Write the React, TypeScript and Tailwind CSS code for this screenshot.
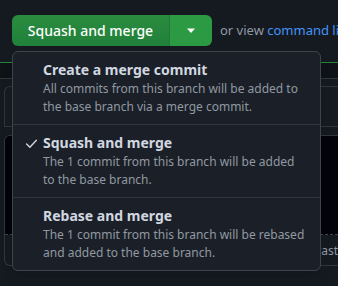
const OPTIONS = [
  {
    title: 'Create a merge commit',
    desc: 'All commits from this branch will be added to the base branch via a merge commit.',
    checked: false,
  },
  {
    title: 'Squash and merge',
    desc: 'The 1 commit from this branch will be added to the base branch.',
    checked: true,
  },
  {
    title: 'Rebase and merge',
    desc: 'The 1 commit from this branch will be rebased and added to the base branch.',
    checked: false,
  },
]

function Check() {
  return (
    <svg width="13" height="13" viewBox="0 0 16 16" fill="none">
      <path d="M2 8.5l4 4 8-8.5" stroke="#d1d7e0" strokeWidth="1.7" strokeLinecap="round" strokeLinejoin="round" />
    </svg>
  )
}

export default function App() {
  return (
    <div
      className="relative w-[338px] h-[286px] overflow-hidden bg-[#151a21]"
      style={{ fontFamily: '"Noto Sans", "Liberation Sans", sans-serif' }}
    >
      {/* merge button row */}
      <div className="flex items-center pt-[15px] pl-[12px]">
        <div className="flex shrink-0 h-[31px] rounded-[6px] overflow-hidden">
          <button className="w-[158px] bg-gradient-to-b from-[#2a8c3f] to-[#21803a] text-white text-[14px] font-medium whitespace-nowrap border-r border-[#1f7a35]">
            Squash and merge
          </button>
          <button className="w-[42px] flex items-center justify-center bg-[#2c9a43]">
            <svg width="10" height="6" viewBox="0 0 10 6">
              <path d="M1 0.5h8L5 5z" fill="#ffffff" />
            </svg>
          </button>
        </div>
        <span className="ml-[8px] shrink-0 text-[13px] whitespace-nowrap text-[#9198a1]">
          or view <span className="text-[#4493f8]">command line instructions</span>
        </span>
      </div>

      {/* merge box behind the menu */}
      <div className="mt-[16px] border-t border-[#238636]">
        <div className="h-[16px] bg-[#0f1318] border-b border-[#30363d]" />
        <div className="pl-[4px] pt-[7px]">
          <div className="h-[41px] rounded-tl-[6px] border-l border-t border-b border-[#30363d] bg-[#161b22]" />
          <div className="mt-[8px] rounded-l-[6px] border-l border-y border-[#30363d] overflow-hidden">
            <div className="h-[99px] bg-[#020409] border-b border-dashed border-[#3d444d]" />
            <div className="h-[30px] pl-[309px] pt-[2px] flex items-center text-[12px] text-[#9198a1] whitespace-nowrap">
              Paste, drop, or click to add files
            </div>
          </div>
        </div>
      </div>

      {/* dropdown menu */}
      <div className="absolute left-[12px] top-[51px] w-[309px] rounded-[6px] border border-[#3d444d] bg-[#1b2028] shadow-lg">
        {OPTIONS.map((o, i) => (
          <div
            key={o.title}
            className={`flex pl-[12px] pr-[12px] py-[8px] ${i > 0 ? 'border-t border-[#30363d]' : ''}`}
          >
            <div className="w-[18px] shrink-0 pt-[4px]">{o.checked && <Check />}</div>
            <div>
              <div className="text-[14px] leading-[20px] font-bold text-[#d1d7e0]">{o.title}</div>
              <div className="text-[12px] leading-[18px] text-[#9198a1]">{o.desc}</div>
            </div>
          </div>
        ))}
      </div>
    </div>
  )
}
